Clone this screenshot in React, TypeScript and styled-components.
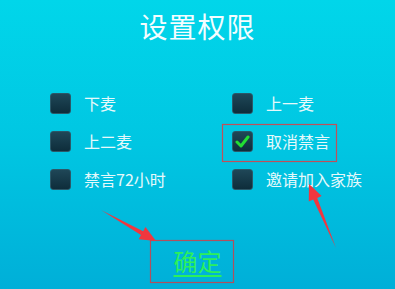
import React from "react";
import styled, { createGlobalStyle } from "styled-components";

const GlobalStyle = createGlobalStyle`
  html, body {
    margin: 0;
    padding: 0;
    font-family: "Noto Sans CJK SC", "Noto Sans", sans-serif;
  }
`;

const Screen = styled.div`
  position: relative;
  width: 395px;
  height: 289px;
  overflow: hidden;
  background: linear-gradient(180deg, #01d6ea 0%, #00c6e2 50%, #00afd8 100%);
  display: flex;
  flex-direction: column;
  align-items: center;
`;

const Title = styled.h1`
  margin: 9px 0 0;
  font-size: 28px;
  font-weight: 400;
  line-height: 34px;
  color: #f4fdff;
  letter-spacing: 1px;
`;

const Grid = styled.div`
  align-self: stretch;
  display: grid;
  grid-template-columns: 182px 1fr;
  grid-auto-rows: 38px;
  padding: 41px 0 0 50px;
`;

const Option = styled.label`
  display: flex;
  align-items: center;
  height: 38px;
  gap: 13px;
  color: #e6f9fb;
  font-size: 16px;
`;

const Box = styled.span`
  width: 21px;
  height: 21px;
  border-radius: 3px;
  box-sizing: border-box;
  border: 1px solid #2b5868;
  background: linear-gradient(180deg, #1f4757 0%, #0e2d3b 100%);
  display: flex;
  align-items: center;
  justify-content: center;
`;

const Confirm = styled.button`
  margin-top: 48px;
  background: none;
  border: none;
  padding: 0;
  font-family: inherit;
  font-size: 24px;
  line-height: 30px;
  color: #2cf05a;
  text-decoration: underline;
  text-underline-offset: 4px;
  text-decoration-thickness: 2px;
  cursor: pointer;
`;

const Overlay = styled.svg`
  position: absolute;
  inset: 0;
  pointer-events: none;
`;

const options = [
  { label: "下麦", checked: false },
  { label: "上一麦", checked: false },
  { label: "上二麦", checked: false },
  { label: "取消禁言", checked: true },
  { label: "禁言72小时", checked: false },
  { label: "邀请加入家族", checked: false },
];

function Check() {
  return (
    <svg width="15" height="13" viewBox="0 0 15 13">
      <path
        d="M2 7 L6 11 L13 2"
        fill="none"
        stroke="#22dd33"
        strokeWidth="3"
        strokeLinecap="round"
        strokeLinejoin="round"
      />
    </svg>
  );
}

function Arrow({ x1, y1, x2, y2 }: { x1: number; y1: number; x2: number; y2: number }) {
  const dx = x2 - x1;
  const dy = y2 - y1;
  const len = Math.hypot(dx, dy);
  const ux = dx / len;
  const uy = dy / len;
  const px = -uy;
  const py = ux;
  const headLen = 16;
  const headW = 7;
  const bx = x2 - ux * headLen;
  const by = y2 - uy * headLen;
  const pts = [
    [x1, y1],
    [bx + px * 2.2, by + py * 2.2],
    [bx + px * headW, by + py * headW],
    [x2, y2],
    [bx - px * headW, by - py * headW],
    [bx - px * 2.2, by - py * 2.2],
  ]
    .map(p => p.join(","))
    .join(" ");
  return <polygon points={pts} fill="#f0373f" />;
}

export default function App() {
  return (
    <>
      <GlobalStyle />
      <Screen>
        <Title>设置权限</Title>
        <Grid>
          {options.map(o => (
            <Option key={o.label}>
              <Box>{o.checked && <Check />}</Box>
              {o.label}
            </Option>
          ))}
        </Grid>
        <Confirm>确定</Confirm>
        <Overlay width="395" height="289">
          <rect x="222.5" y="124.5" width="114" height="37" fill="none" stroke="#c0505a" strokeWidth="1.2" />
          <rect x="150.5" y="240.5" width="83" height="42" fill="none" stroke="#b0505e" strokeWidth="1.2" />
          <Arrow x1={101} y1={210} x2={156} y2={241} />
          <Arrow x1={336} y1={248} x2={309} y2={184} />
        </Overlay>
      </Screen>
    </>
  );
}
